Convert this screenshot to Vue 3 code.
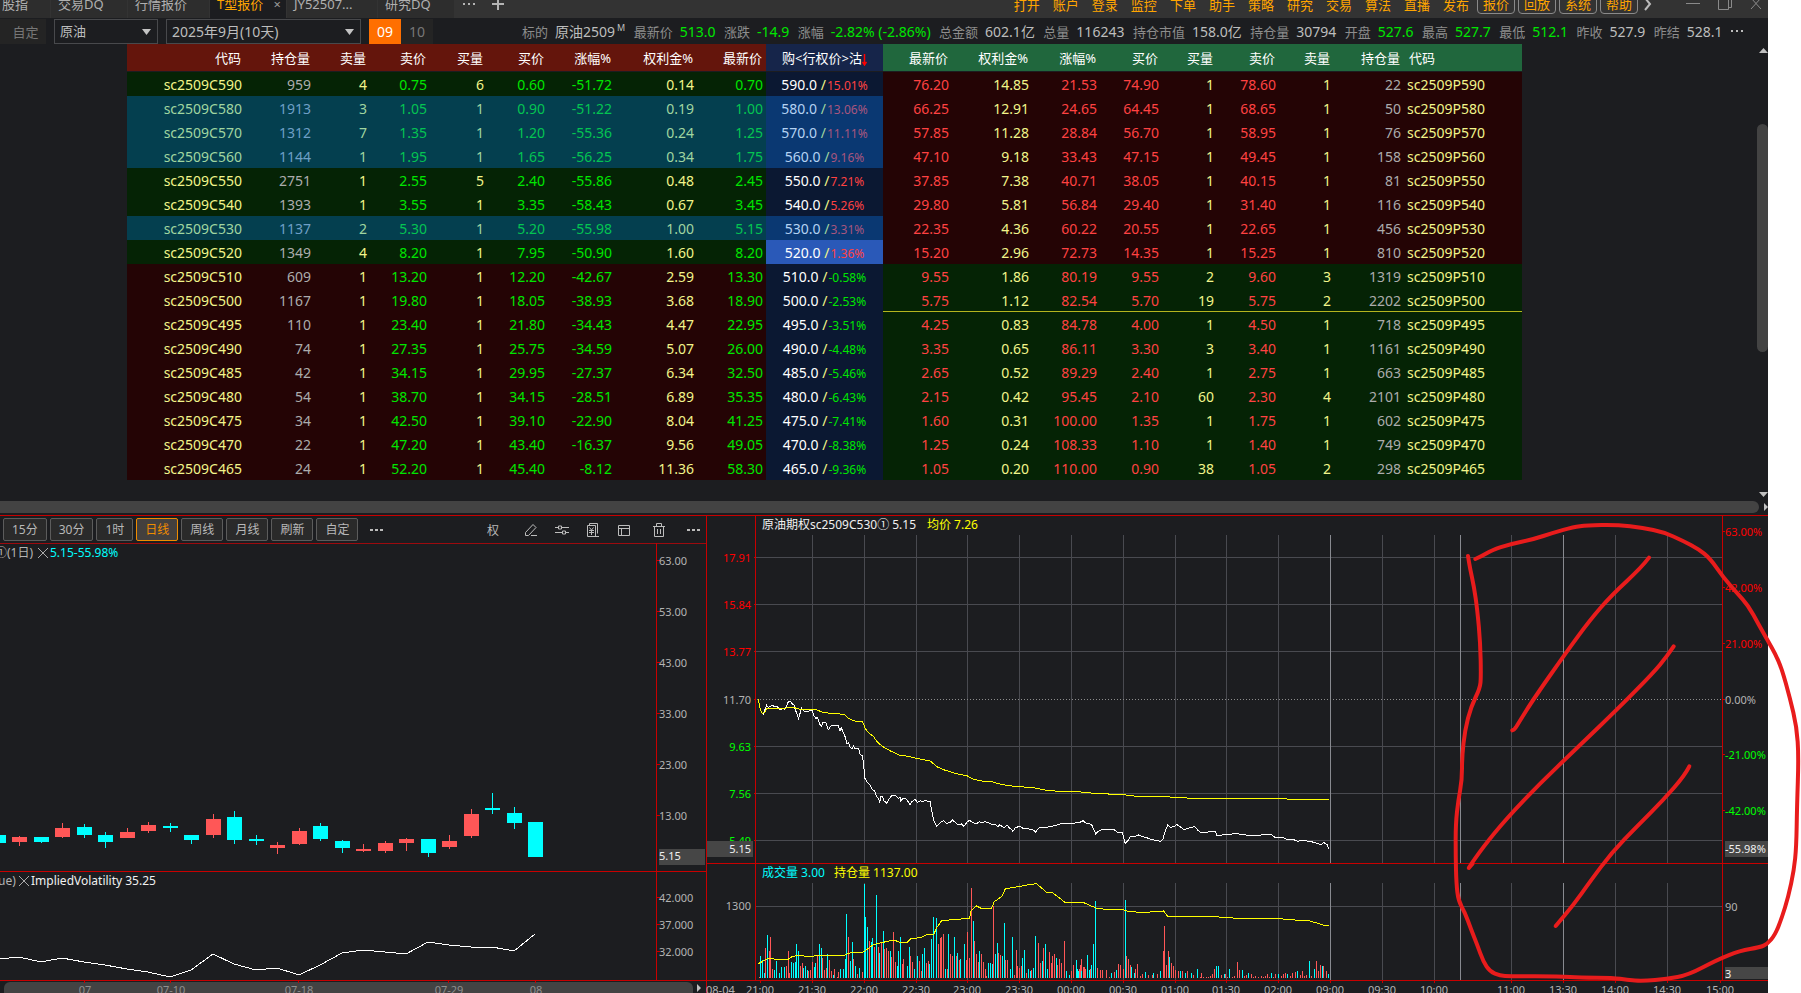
<script setup>
const tabs = [
  { name: '股指', w: 50 },
  { name: '交易DQ', w: 76 },
  { name: '行情报价', w: 81 },
  { name: 'T型报价', w: 76, active: true },
  { name: 'JY52507...', w: 90 },
  { name: '研究DQ', w: 76 },
]
const menu = ['打开', '账户', '登录', '监控', '下单', '助手', '策略', '研究', '交易', '算法', '直播', '发布']
const boxedMenu = ['报价', '回放', '系统', '帮助']

const quote = [
  { k: '标的', v: '原油2509', sup: 'M' },
  { k: '最新价', v: '513.0', g: true },
  { k: '涨跌', v: '-14.9', g: true },
  { k: '涨幅', v: '-2.82% (-2.86%)', g: true },
  { k: '总金额', v: '602.1亿' },
  { k: '总量', v: '116243' },
  { k: '持仓市值', v: '158.0亿' },
  { k: '持仓量', v: '30794' },
  { k: '开盘', v: '527.6', g: true },
  { k: '最高', v: '527.7', g: true },
  { k: '最低', v: '512.1', g: true },
  { k: '昨收', v: '527.9' },
  { k: '昨结', v: '528.1' },
]

const columns = [118, 69, 56, 60, 57, 61, 67, 82, 69, 117, 69, 80, 68, 62, 55, 62, 55, 70, 118]
const callHeads = ['代码', '持仓量', '卖量', '卖价', '买量', '买价', '涨幅%', '权利金%', '最新价']
const putHeads = ['最新价', '权利金%', '涨幅%', '买价', '买量', '卖价', '卖量', '持仓量', '代码']

// strike | strike distance | call cells | put cells
const rows = `590|15.01%|959 4 0.75 6 0.60 -51.72 0.14 0.70|76.20 14.85 21.53 74.90 1 78.60 1 22
580|13.06%|1913 3 1.05 1 0.90 -51.22 0.19 1.00|66.25 12.91 24.65 64.45 1 68.65 1 50
570|11.11%|1312 7 1.35 1 1.20 -55.36 0.24 1.25|57.85 11.28 28.84 56.70 1 58.95 1 76
560|9.16%|1144 1 1.95 1 1.65 -56.25 0.34 1.75|47.10 9.18 33.43 47.15 1 49.45 1 158
550|7.21%|2751 1 2.55 5 2.40 -55.86 0.48 2.45|37.85 7.38 40.71 38.05 1 40.15 1 81
540|5.26%|1393 1 3.55 1 3.35 -58.43 0.67 3.45|29.80 5.81 56.84 29.40 1 31.40 1 116
530|3.31%|1137 2 5.30 1 5.20 -55.98 1.00 5.15|22.35 4.36 60.22 20.55 1 22.65 1 456
520|1.36%|1349 4 8.20 1 7.95 -50.90 1.60 8.20|15.20 2.96 72.73 14.35 1 15.25 1 810
510|-0.58%|609 1 13.20 1 12.20 -42.67 2.59 13.30|9.55 1.86 80.19 9.55 2 9.60 3 1319
500|-2.53%|1167 1 19.80 1 18.05 -38.93 3.68 18.90|5.75 1.12 82.54 5.70 19 5.75 2 2202
495|-3.51%|110 1 23.40 1 21.80 -34.43 4.47 22.95|4.25 0.83 84.78 4.00 1 4.50 1 718
490|-4.48%|74 1 27.35 1 25.75 -34.59 5.07 26.00|3.35 0.65 86.11 3.30 3 3.40 1 1161
485|-5.46%|42 1 34.15 1 29.95 -27.37 6.34 32.50|2.65 0.52 89.29 2.40 1 2.75 1 663
480|-6.43%|54 1 38.70 1 34.15 -28.51 6.89 35.35|2.15 0.42 95.45 2.10 60 2.30 4 2101
475|-7.41%|34 1 42.50 1 39.10 -22.90 8.04 41.25|1.60 0.31 100.00 1.35 1 1.75 1 602
470|-8.38%|22 1 47.20 1 43.40 -16.37 9.56 49.05|1.25 0.24 108.33 1.10 1 1.40 1 749
465|-9.36%|24 1 52.20 1 45.40 -8.12 11.36 58.30|1.05 0.20 110.00 0.90 38 1.05 2 298`
  .split('\n')
  .map((line) => {
    const [strike, dist, call, put] = line.split('|')
    const n = Number(strike)
    return {
      strike,
      dist,
      call: call.split(' '),
      put: put.split(' '),
      above: n >= 520,
      held: [580, 570, 560, 530].includes(n),
      atm: n === 520,
      mark: n === 500,
    }
  })
const callKinds = ['oi', 'vol', 'dn', 'vol', 'dn', 'dn', 'vol', 'dn']
const putKinds = ['up', 'vol', 'up', 'up', 'vol', 'up', 'vol', 'oi']

const periods = ['15分', '30分', '1时', '日线', '周线', '月线', '刷新', '自定']

// centre, body top, body bottom, high, low, rising
const candles = [
  [-2, 835, 843, 835, 843, 0], [19, 837, 842, 836, 846, 1], [41, 837, 842, 837, 843, 0],
  [62, 828, 837, 823, 838, 1], [84, 827, 835, 824, 838, 0], [105, 835, 842, 832, 848, 0],
  [127, 832, 838, 828, 838, 1], [148, 825, 831, 822, 833, 1], [170, 826, 828, 823, 832, 0],
  [191, 835, 840, 835, 844, 0], [213, 819, 835, 814, 838, 1], [234, 817, 840, 811, 844, 0],
  [256, 839, 841, 835, 845, 0], [277, 845, 848, 842, 854, 1], [299, 831, 844, 828, 845, 1],
  [320, 826, 839, 823, 841, 0], [342, 841, 848, 840, 853, 0], [363, 849, 851, 844, 852, 1],
  [385, 843, 851, 841, 853, 1], [406, 839, 843, 838, 851, 1], [428, 839, 853, 839, 857, 0],
  [449, 841, 847, 835, 849, 1], [471, 814, 836, 809, 838, 1], [492, 808, 810, 793, 814, 0],
  [514, 813, 823, 807, 829, 0], [535, 822, 857, 822, 857, 0],
]
const volatility =
  '0,959 19,957 41,962 62,958 84,962 105,965 127,969 148,972 170,977 191,970 213,954 234,964 256,970 277,968 299,975 320,965 342,953 363,950 385,952 406,954 428,942 449,945 471,947 492,947 514,951 535,934'

const priceAxis = [63, 53, 43, 33, 23, 13].map((v, i) => ({ t: v + '.00', y: 561 + i * 51 }))
const volAxis = [{ t: '42.000', y: 898 }, { t: '37.000', y: 925 }, { t: '32.000', y: 952 }]
const dates = [{ t: '07', x: 85 }, { t: '07-10', x: 171 }, { t: '07-18', x: 299 }, { t: '07-29', x: 449 }, { t: '08', x: 536 }]

const leftScale = [
  { t: '17.91', y: 557, c: 'red' }, { t: '15.84', y: 604, c: 'red' }, { t: '13.77', y: 651, c: 'red' },
  { t: '11.70', y: 699, c: 'grey' }, { t: '9.63', y: 746, c: 'green' }, { t: '7.56', y: 793, c: 'green' },
  { t: '5.49', y: 840, c: 'green' },
]
const rightScale = [
  { t: '63.00%', y: 532, c: 'red' }, { t: '42.00%', y: 588, c: 'red' }, { t: '21.00%', y: 644, c: 'red' },
  { t: '0.00%', y: 700, c: 'grey' }, { t: '-21.00%', y: 755, c: 'green' }, { t: '-42.00%', y: 811, c: 'green' },
]
const times = [
  ['21:00', 760], ['21:30', 812], ['22:00', 864], ['22:30', 916], ['23:00', 967], ['23:30', 1019],
  ['00:00', 1071], ['00:30', 1123], ['01:00', 1175], ['01:30', 1226], ['02:00', 1278], ['09:00', 1330],
  ['09:30', 1382], ['10:00', 1434], ['11:00', 1511], ['13:30', 1563], ['14:00', 1615], ['14:30', 1667], ['15:00', 1720],
]
const gridX = [812, 864, 916, 967, 1019, 1071, 1123, 1175, 1226, 1278, 1382, 1434, 1511, 1615, 1667]
const sessionX = [1330, 1460, 1563]

const lastPrice =
  '143,597 145,612 148,630 152,640 156,643 160,625 163,616 167,622 172,619 177,615 182,620 188,619 193,625 198,630 203,624 208,628 212,618 216,606 222,605 226,612 230,615 233,628 237,640 241,656 245,640 249,625 255,634 262,636 268,632 275,630 279,648 284,655 288,652 293,672 297,680 301,668 308,667 314,690 320,678 330,677 338,676 343,692 346,684 352,700 356,712 360,732 364,728 368,742 373,746 376,738 380,746 388,745 392,762 398,768 401,800 404,835 410,848 416,855 422,868 428,873 432,890 437,896 440,907 443,890 447,890 450,902 458,910 464,895 470,887 478,886 486,895 490,892 492,904 497,894 503,895 508,902 514,914 519,905 527,898 532,907 540,902 546,905 553,900 558,906 564,906 567,930 572,960 580,979 588,968 597,962 604,970 612,968 618,960 626,968 632,974 640,972 646,979 654,966 660,961 668,968 676,972 684,965 692,968 698,965 706,968 714,973 722,972 730,980 734,974 740,980 746,982 752,975 758,984 764,990 766,995 772,984 783,978 792,986 800,985 808,988 816,990 822,996 830,984 840,981 850,982 860,979 872,976 884,971 892,972 902,970 912,972 922,968 932,966 938,962 944,969 952,970 960,976 965,990 969,1002 975,994 985,988 1000,988 1014,989 1022,996 1034,998 1038,1015 1041,1030 1048,1022 1054,1010 1064,1010 1074,1005 1084,1010 1092,1012 1104,1018 1116,1021 1128,1024 1134,1018 1138,998 1146,974 1152,982 1160,980 1168,974 1176,980 1186,990 1192,986 1200,983 1212,980 1220,992 1228,998 1244,996 1262,995 1266,1006 1290,1004 1310,1001 1330,1003 1350,1008 1370,1006 1386,1002 1400,1004 1408,1012 1430,1014 1440,1020 1452,1018 1464,1024 1476,1020 1490,1024 1500,1026 1510,1030 1520,1034 1528,1028 1536,1034 1540,1046'
const averagePrice =
  '143,597 147,625 152,640 158,638 164,626 200,626 216,623 228,622 245,628 275,628 287,630 300,637 320,640 353,643 362,654 378,663 398,664 405,687 415,700 425,710 435,727 450,742 465,752 490,766 510,769 530,775 564,783 580,800 596,809 625,820 655,828 670,838 690,843 714,845 740,854 770,859 815,863 850,871 880,874 925,875 965,880 1035,884 1070,889 1135,890 1165,892 1205,895 1420,896 1455,898 1540,900'
const openInterest =
  '143,371 152,365 165,357 180,357 216,358 225,350 238,347 270,349 300,346 350,347 372,337 400,336 410,327 425,314 440,309 460,304 475,300 490,307 508,307 516,296 540,293 555,284 572,285 580,262 592,242 610,240 650,236 660,236 664,212 677,198 690,206 714,206 720,186 740,168 748,146 785,139 795,136 824,131 848,156 862,157 895,188 910,189 940,188 960,199 975,206 1000,208 1035,208 1045,213 1075,217 1130,215 1135,212 1145,229 1185,230 1250,229 1290,233 1318,235 1420,236 1440,239 1490,242 1508,248 1530,257 1540,255'

// Volume ticks: early session and late session are sampled on different scales.
const buyEarly =
  '25,228;31,240;37,279;46,165;67,270;73,243;82,279;88,261;97,261;118,246;124,249;130,246;133,192;139,213;154,264;160,258;166,270;187,261;190,249;202,192;208,204;226,222;244,285;265,267;273,267;280,237;283,102;295,243;301,186;310,258;322,264;337,12;340,111;346,141;358,186;361,174;373,45;382,219;394,153;415,212;436,258;439,213;445,171;466,258;472,201;487,267;496,228;511,222;517,204;532,252;538,177;544,111;553,114;580,267;589,162;607,171;616,219;625,238;637,192;664,123;682,213;709,249;715,249;721,252;730,222;736,189;751,228;757,129;775,267;781,171;811,234;817,210;829,267;835,273;844,264;850,168;871,243;880,192;886,267;913,234;943,273;952,285;973,240;979,273;1006,225;1012,270'
const sellEarly =
  '22,291;40,204;52,213;55,171;61,267;103,258;109,213;112,279;145,258;151,249;169,273;175,270;181,246;196,228;211,234;217,270;223,264;232,240;238,273;247,267;256,291;259,276;289,171;304,237;316,282;331,276;352,183;367,201;379,201;388,189;397,207;403,204;409,213;418,231;424,156;430,246;451,252;454,237;475,228;481,246;502,243;508,273;523,249;529,243;559,192;565,174;568,171;574,162;586,267;595,222;601,228;613,228;622,240;643,240;646,156;652,234;658,24;667,183;673,222;679,246;688,222;694,246;700,267;703,288;724,78;739,219;745,225;760,240;766,240;787,285;793,210;796,258;802,264;808,258;823,279;838,270;859,189;865,249;874,204;892,216;898,249;901,228;907,222;916,255;922,237;928,249;937,183;958,273;964,255;982,267;988,237;994,261;1000,267;1015,267'
const buyLate =
  '925,387;935,392;950,345;960,375;964,312;968,183;1008,400;1021,390;1042,180;1058,380;1064,400;1091,395;1112,400;1128,392;1150,350;1176,392;1190,398;1205,400;1219,386;1266,378;1270,378;1285,402;1298,388;1330,390;1345,398;1400,399;1418,403;1440,402;1465,393;1493,362;1505,388;1524,378;1540,401'
const sellLate =
  '916,387;922,360;931,375;943,380;955,398;974,385;980,390;986,391;996,390;1003,410;1015,395;1025,373;1029,376;1037,388;1045,348;1050,358;1055,376;1068,388;1072,373;1078,408;1085,401;1100,404;1108,405;1120,401;1135,332;1138,258;1143,374;1148,333;1155,370;1160,378;1166,391;1172,393;1182,394;1195,393;1210,404;1225,410;1229,400;1234,410;1240,410;1245,410;1250,408;1256,402;1261,388;1277,405;1288,402;1293,410;1305,410;1310,409;1317,366;1321,390;1335,408;1340,404;1350,401;1356,410;1362,408;1368,410;1375,407;1381,410;1386,409;1390,403;1395,410;1405,410;1410,403;1424,408;1430,402;1435,400;1446,407;1452,399;1458,396;1470,406;1475,393;1480,408;1485,406;1498,409;1510,362;1516,394;1520,375;1528,377;1535,393'
function ticks(data, x0, sx, y0) {
  return data
    .split(';')
    .map((p) => {
      const [x, y] = p.split(',').map(Number)
      return `M${Math.floor(x0 + x / sx) + 0.5} ${Math.round(y0 + y / 3)}V978`
    })
    .join('')
}
const buyPath = ticks(buyEarly, 752, 3, 880) + ticks(buyLate, 700, 2.45, 840)
const sellPath = ticks(sellEarly, 752, 3, 880) + ticks(sellLate, 700, 2.45, 840)

function smooth(data) {
  const p = data.split(' ').map((s) => s.split(',').map(Number))
  let d = `M${p[0][0]} ${p[0][1]}`
  for (let i = 1; i < p.length - 1; i++) {
    d += `Q${p[i][0]} ${p[i][1]} ${(p[i][0] + p[i + 1][0]) / 2} ${(p[i][1] + p[i + 1][1]) / 2}`
  }
  const e = p[p.length - 1]
  return d + `L${e[0]} ${e[1]}`
}
const penStrokes = [
  '526,207 545,199 575,181 630,162 700,148 760,128 820,111 860,106 950,104 1030,114 1090,126 1150,153 1195,177 1230,205 1270,262 1310,308 1345,347 1375,402 1405,455 1425,490 1445,535 1470,625 1490,710 1496,800 1491,950 1489,1070 1482,1140 1465,1220 1445,1285 1425,1335 1402,1362 1380,1372 1320,1382 1250,1410 1165,1455 1100,1467 1030,1473 980,1470 940,1463 840,1463 780,1459 630,1459 600,1457 570,1445 550,1415 532,1365 512,1315 495,1268 475,1232 469,1180 467,1100 467,1000 475,930 486,870 486,800 495,720 513,650 540,595 543,560 541,460 532,360 522,290 510,235 504,198',
  '1047,203 1025,232 935,315 870,390 800,485 700,628 660,692 645,717 637,721',
  '1121,469 1100,500 1060,548 960,650 830,775 720,880 620,985 550,1070 500,1142 517,1122',
  '1168,829 1155,855 1090,930 1010,1010 935,1088 870,1175 820,1245 767,1308',
].map(smooth)
</script>

<template>
  <div class="page">
    <div class="window">
      <header class="titlebar">
        <nav class="tabs">
          <button v-for="t in tabs" :key="t.name" class="tab" :class="{ active: t.active }" :style="{ width: t.w + 'px' }">
            {{ t.name }}<span v-if="t.active" class="close">×</span>
          </button>
          <button class="more" aria-label="更多">
            <svg width="14" height="4"><path d="M1 2h2M6 2h2M11 2h2" stroke="#b4b4b4" stroke-width="2" /></svg>
          </button>
          <button class="add" aria-label="新建">
            <svg width="12" height="12"><path d="M0 6h12M6 0v12" stroke="#b4b4b4" stroke-width="2" /></svg>
          </button>
        </nav>
        <div class="menu">
          <button v-for="m in menu" :key="m" class="item">{{ m }}</button>
          <div class="boxes"><button v-for="m in boxedMenu" :key="m" class="box">{{ m }}</button></div>
          <svg class="chev" width="8" height="14"><path d="M1 1l5 6-5 6" fill="none" stroke="#bbb" stroke-width="2" /></svg>
        </div>
        <div class="controls">
          <button aria-label="最小化"><svg width="14" height="14"><path d="M0 6.500h14" stroke="#8a8a8a" /></svg></button>
          <button aria-label="还原"><svg width="14" height="14"><path d="M.5 2.500h10v10H.5zM13.500 0v10.500H11" fill="none" stroke="#8a8a8a" /></svg></button>
          <button aria-label="关闭"><svg width="12" height="14"><path d="M1 1l10 11M11 1L1 12" stroke="#8a8a8a" /></svg></button>
        </div>
      </header>

      <div class="infobar">
        <button class="custom">自定</button>
        <div class="pick variety">
          <select aria-label="品种"><option>原油</option></select>
          <svg width="9" height="6"><path d="M0 0h9L4.500 6z" fill="#c4c4c4" /></svg>
        </div>
        <div class="pick month">
          <select aria-label="到期月份"><option>2025年9月(10天)</option></select>
          <svg width="9" height="6"><path d="M0 0h9L4.500 6z" fill="#c4c4c4" /></svg>
        </div>
        <div class="months"><button class="on">09</button><button>10</button></div>
        <div class="quote">
          <span v-for="q in quote" :key="q.k" class="pair">
            <span class="k">{{ q.k }}</span><span :class="{ g: q.g }">{{ q.v }}</span><sup v-if="q.sup">{{ q.sup }}</sup>
          </span>
          <svg width="12" height="2"><path d="M0 1h2M5 1h2M10 1h2" stroke="#bbb" stroke-width="2" /></svg>
        </div>
      </div>

      <div class="board">
        <div class="tablewrap">
          <table>
            <colgroup><col v-for="(w, i) in columns" :key="i" :style="{ width: w + 'px' }" /></colgroup>
            <thead>
              <tr>
                <th v-for="h in callHeads" :key="'c' + h" class="hc">{{ h }}</th>
                <th class="hm">购&lt;行权价&gt;沽<svg width="5" height="12"><path d="M2.500 0v11M.5 8l2 3 2-3" fill="none" stroke="#f00" stroke-width="1.500" /></svg></th>
                <th v-for="h in putHeads" :key="'p' + h" class="hp" :class="{ code: h === '代码' }">{{ h }}</th>
              </tr>
            </thead>
            <tbody>
              <tr v-for="r in rows" :key="r.strike" :class="{ above: r.above, held: r.held, atm: r.atm, mark: r.mark }">
                <td class="call vol">sc2509C{{ r.strike }}</td>
                <td v-for="(v, i) in r.call" :key="'c' + i" class="call" :class="callKinds[i]">{{ v }}</td>
                <td class="strike">{{ r.strike }}.0 <i>/</i><b :class="r.above ? 'up' : 'dn'">{{ r.dist }}</b></td>
                <td v-for="(v, i) in r.put" :key="'p' + i" class="put" :class="putKinds[i]">{{ v }}</td>
                <td class="put vol code">sc2509P{{ r.strike }}</td>
              </tr>
            </tbody>
          </table>
        </div>
        <div class="vscroll">
          <svg width="9" height="5"><path d="M0 5h9L4.500 0z" fill="#c0c0c0" /></svg>
          <div class="vthumb"></div>
          <svg width="9" height="5"><path d="M0 0h9L4.500 5z" fill="#c0c0c0" /></svg>
        </div>
      </div>
      <div class="hscroll">
        <div class="hthumb"></div>
        <svg width="4" height="8"><path d="M0 0v8l4-4z" fill="#c0c0c0" /></svg>
      </div>

      <main class="charts">
        <section class="daily">
          <div class="toolbar">
            <button v-for="p in periods" :key="p" class="period" :class="{ on: p === '日线' }">{{ p }}</button>
            <button class="dots" aria-label="更多周期"><svg width="13" height="2"><path d="M0 1h3M5 1h3M10 1h3" stroke="#bbb" stroke-width="2" /></svg></button>
            <div class="tools">
              <button class="adj">权</button>
              <button aria-label="画线"><svg width="14" height="14" class="ic"><path d="M1.500 9.500l7.500-8 3 3-7.500 8H1.500zM7 12.500h6" /></svg></button>
              <button aria-label="设置"><svg width="14" height="14" class="ic"><path d="M0 4.500h3M7 4.500h7M0 9.500h7M11 9.500h3M3.500 3h3v3h-3zM7.500 8h3v3h-3z" /></svg></button>
              <button aria-label="模拟"><svg width="14" height="14" class="ic"><path d="M3.500 2.500v-2h8v10M1.500 2.500h8v11h-8zM3.500 4.500l2 2.500 2-2.500M3 7.500h5M3 9.500h5M5.500 7v5M9 13.500h4" /></svg></button>
              <button aria-label="布局"><svg width="14" height="14" class="ic"><path d="M1.500 2.500h11v10h-11zM1.500 5.500h11M4.500 5.500v7" /></svg></button>
              <button class="trash" aria-label="删除"><svg width="14" height="14" class="ic"><path d="M1 3.500h12M4.500 3V.5h5V3M2.500 3.500v10h9v-10M5.500 6v5M8.500 6v5" /></svg></button>
              <button class="trash" aria-label="更多工具"><svg width="13" height="2"><path d="M0 1h3M5 1h3M10 1h3" stroke="#bbb" stroke-width="2" /></svg></button>
            </div>
          </div>
          <svg class="plot" viewBox="0 543 706 450">
            <path d="M0 543.500h706" stroke="#9c0a0e" />
            <text x="-5" y="557" class="t12 grey">①(1日)</text>
            <path d="M38 548l10 10M48 548l-10 10" stroke="#aaa" />
            <text x="50" y="557" class="t12 cyan">5.15-55.98%</text>
            <g v-for="c in candles" :key="c[0]" :fill="c[5] ? '#ff5757' : '#00ffff'">
              <rect :x="c[0] - 7" :y="c[1]" width="15" :height="c[2] - c[1]" />
              <rect :x="c[0]" :y="c[3]" width="1" :height="c[4] - c[3]" />
            </g>
            <path class="line" d="M656.500 543v437M0 871.500h706M0 980.500h706" />
            <g v-for="a in [...priceAxis, ...volAxis]" :key="a.t">
              <path class="line" :d="`M657 ${a.y - 0.5}h3`" />
              <text x="659" :y="a.y + 4" class="t11 grey">{{ a.t }}</text>
            </g>
            <rect x="659" y="849" width="46" height="16" fill="#464646" />
            <text x="659" y="860" class="t11 light">5.15</text>
            <text x="-2" y="885" class="t12 grey">ue)</text>
            <path d="M19 876l10 10M29 876l-10 10" stroke="#aaa" />
            <text x="31" y="885" class="t12 light">ImpliedVolatility 35.25</text>
            <polyline :points="volatility" class="trace" fill="none" stroke="#fff" />
            <rect x="4" y="982" width="689" height="16" rx="6" fill="#434343" />
            <g v-for="d in dates" :key="d.t">
              <path class="line" :d="`M${d.x - 0.5} 980v3`" />
              <text :x="d.x" y="994" text-anchor="middle" class="t11 dim">{{ d.t }}</text>
            </g>
            <path d="M697 984v8l4-4z" fill="#c0c0c0" />
          </svg>
        </section>

        <section class="intraday">
          <svg class="plot" viewBox="706 516 1062 477">
            <g class="grid">
              <path v-for="x in gridX" :key="x" :d="`M${x + 0.5} 535V863M${x + 0.5} 883V980`" />
              <path v-for="y in [557, 604, 651, 746, 793, 840, 906]" :key="y" :d="`M756 ${y + 0.5}H1722`" />
            </g>
            <path v-for="x in sessionX" :key="x" :d="`M${x + 0.5} 535V863M${x + 0.5} 883V980`" stroke="#888a90" />
            <path d="M757 699.500H1722" stroke="#8c8c8c" stroke-dasharray="1 2" />
            <g fill="none">
              <path :d="sellPath" stroke="#ff5757" />
              <path :d="buyPath" stroke="#00ffff" />
              <g transform="translate(700 500) scale(.40833 .33333)">
                <polyline :points="lastPrice" class="trace" stroke="#fff" />
                <polyline :points="averagePrice" class="trace" stroke="#ff0" />
              </g>
              <g transform="translate(700 840) scale(.40833 .33333)">
                <polyline :points="openInterest" class="trace" stroke="#ff0" />
              </g>
            </g>
            <path class="line" d="M706.500 516V993M755.500 516V980M1722.500 516V980M706 863.500H1768M706 980.500H1768" />
            <text x="762" y="529" class="t12 light">原油期权sc2509C530① 5.15</text>
            <text x="927" y="529" class="t12 yellow">均价 7.26</text>
            <text x="762" y="877" class="t12 cyan">成交量 3.00</text>
            <text x="834" y="877" class="t12 yellow">持仓量 1137.00</text>
            <g v-for="s in leftScale" :key="s.t">
              <path class="line" :d="`M754 ${s.y + 0.5}h2`" />
              <text x="751" :y="s.y + 5" text-anchor="end" class="t11" :class="s.c">{{ s.t }}</text>
            </g>
            <rect x="707" y="841" width="46" height="16" fill="#464646" />
            <text x="751" y="853" text-anchor="end" class="t11 light">5.15</text>
            <text x="751" y="910" text-anchor="end" class="t11 grey">1300</text>
            <g v-for="s in rightScale" :key="s.t">
              <path class="line" :d="`M1722 ${s.y - 0.5}h3`" />
              <text x="1725" :y="s.y + 4" class="t11" :class="s.c">{{ s.t }}</text>
            </g>
            <rect x="1725" y="841" width="43" height="16" fill="#464646" />
            <text x="1725" y="853" class="t11 light">-55.98%</text>
            <text x="1725" y="911" class="t11 grey">90</text>
            <rect x="1725" y="967" width="43" height="12" fill="#464646" />
            <text x="1725" y="978" class="t11 light">3</text>
            <text x="706" y="994" class="t11 grey">08-04</text>
            <g v-for="t in times" :key="t[0]">
              <path class="line" :d="`M${t[1] + 0.5} 980v3`" />
              <text :x="t[1]" y="994" text-anchor="middle" class="t11 grey">{{ t[0] }}</text>
            </g>
          </svg>
        </section>
      </main>
    </div>

    <svg class="pen" viewBox="0 0 1801 993" aria-hidden="true">
      <g transform="translate(1300 490) scale(.33333)">
        <path v-for="(d, i) in penStrokes" :key="i" :d="d" />
      </g>
    </svg>
  </div>
</template>

<style>
body {
  background: #fff;
}
</style>

<style scoped>
.page {
  position: relative;
  height: 100vh;
  overflow: hidden;
  padding-right: 33px;
  box-sizing: border-box;
  font-family: 'Noto Sans', 'Noto Sans CJK SC', sans-serif;
  font-size: 13px;
}
.window {
  height: 100%;
  overflow: hidden;
  background: #1c1d20;
}
button,
select {
  font: inherit;
  color: inherit;
  background: none;
  border: 0;
  padding: 0;
  margin: 0;
}
button svg {
  display: block;
}
.titlebar {
  display: flex;
  align-items: flex-end;
  height: 18px;
  overflow: hidden;
  background: #333;
}
.tabs {
  display: flex;
  align-items: center;
  flex: 1;
  color: #b0b0b0;
}
.tab {
  position: relative;
  height: 28px;
  line-height: 28px;
  margin-right: 1px;
  box-sizing: border-box;
  padding-left: 7px;
  text-align: left;
  white-space: nowrap;
  background: #2d2d2d;
}
.tab:first-child {
  padding-left: 2px;
}
.tab.active {
  background: #1c1d20;
  color: #ffa500;
}
.close {
  position: absolute;
  right: 5px;
  top: 0;
  color: #999;
}
.more {
  margin-left: 7px;
}
.add {
  margin-left: 16px;
}
.menu {
  display: flex;
  align-items: center;
  height: 28px;
  gap: 13px;
  color: #ffa500;
}
.boxes {
  display: flex;
  gap: 3px;
  margin-left: -5px;
}
.box {
  width: 38px;
  height: 20px;
  line-height: 18px;
  box-sizing: border-box;
  border: 1px solid #8a8a8a;
  border-radius: 4px;
}
.chev {
  margin-left: -7px;
}
.controls {
  display: flex;
  align-items: center;
  gap: 18px;
  height: 28px;
  margin: 0 6px 0 34px;
}
.infobar {
  display: flex;
  align-items: center;
  height: 26px;
  color: #bdbdbd;
}
.custom {
  width: 46px;
  height: 25px;
  padding-left: 5px;
  background: #242424;
  color: #777;
}
.pick {
  position: relative;
  height: 25px;
  box-sizing: border-box;
  border: 1px solid #48494c;
  margin-left: 8px;
}
.pick select {
  appearance: none;
  display: block;
  width: 100%;
  height: 23px;
  padding-left: 5px;
  line-height: 23px;
}
.pick svg {
  position: absolute;
  right: 6px;
  top: 9px;
  pointer-events: none;
}
.variety {
  width: 104px;
}
.month {
  width: 195px;
  font-size: 14px;
}
.months {
  display: flex;
  margin-left: 8px;
  font-size: 14px;
  color: #777;
}
.months button {
  width: 32px;
  height: 25px;
  background: #242424;
}
.months .on {
  background: #ff6f00;
  color: #fff;
}
.quote {
  flex: 1;
  display: flex;
  align-items: center;
  justify-content: space-between;
  margin: 0 25px 0 89px;
  font-size: 14px;
  white-space: nowrap;
}
.k {
  font-size: 13px;
  color: #8d8d8d;
  margin-right: 7px;
}
.g {
  color: #00e600;
}
sup {
  font-size: 9px;
  line-height: 1px;
  margin-left: 2px;
}
.board {
  display: flex;
}
.tablewrap {
  flex: 1;
  padding: 0 0 21px 127px;
}
table {
  table-layout: fixed;
  width: 1395px;
  border-spacing: 0;
  font-size: 14px;
}
th {
  height: 27px;
  padding: 0 4px 0 0;
  border-bottom: 1px solid #1c1d20;
  font-size: 13px;
  font-weight: normal;
  text-align: right;
  color: #fff;
}
.hc {
  background: #64150c;
}
.hm {
  background: #16254a;
  text-align: center;
  padding: 0;
}
.hm svg {
  vertical-align: -3px;
}
.hp {
  background: #20673d;
}
td {
  box-sizing: border-box;
  height: 24px;
  line-height: 22px;
  padding: 2px 3px 0 0;
  text-align: right;
  white-space: nowrap;
}
.hp.code {
  text-align: left;
  padding-left: 5px;
}
td.code {
  text-align: left;
  padding: 2px 0 0 3px;
}
.call {
  background: #240405;
}
.put {
  background: #052305;
}
.above .call {
  background: #052305;
}
.above .put {
  background: #240405;
}
.oi {
  color: #acacac;
}
.vol {
  color: #f2f58a;
}
.dn {
  color: #00e600;
}
.up {
  color: #ff4242;
}
.strike {
  background: #0b1832;
  color: #fff;
  text-align: center;
  padding: 2px 0 0;
}
.strike i {
  font-style: normal;
  color: #f2f58a;
}
.strike b {
  font-weight: normal;
  font-size: 12px;
  line-height: 16px;
  margin-left: 1px;
}
.atm .strike {
  background: #2a59b8;
}
.held .call {
  background: #043f4f;
}
.held .call.vol {
  color: #a0d6a0;
}
.held .call.oi {
  color: #6e9fc6;
}
.held .call.dn {
  color: #04c452;
}
.held .strike {
  background: #0a3872;
  color: #b4d2f2;
}
.held .strike i {
  color: #a0d6a0;
}
.held .strike b {
  color: #a8567e;
}
.mark .put {
  box-shadow: inset 0 -1px #b4b41e;
}
.vscroll {
  display: flex;
  flex-direction: column;
  align-items: flex-end;
  width: 11px;
  padding: 4px 0;
}
.vthumb {
  width: 11px;
  height: 228px;
  margin: 71px 0 auto;
  border-radius: 6px;
  background: #434343;
}
.hscroll {
  display: flex;
  align-items: center;
  justify-content: space-between;
  margin-bottom: 2px;
}
.hthumb {
  flex: 1;
  height: 12px;
  margin-right: 5px;
  border-radius: 0 6px 6px 0;
  background: #434343;
}
.charts {
  display: grid;
  grid-template-columns: 706fr 1062fr;
  border-top: 1px solid #c80000;
}
.toolbar {
  display: flex;
  align-items: center;
  gap: 3px;
  height: 27px;
  padding: 0 6px 0 3px;
  color: #b8b8b8;
}
.period {
  height: 23px;
  line-height: 21px;
  padding: 0 8px;
  border: 1px solid #5c5c5c;
  border-radius: 2px;
  background: #2a2a2a;
  font-size: 12px;
}
.period.on {
  border-color: #f08c00;
  background: #43403e;
  color: #f08c00;
}
.dots {
  margin-left: 9px;
}
.tools {
  display: flex;
  align-items: center;
  gap: 17px;
  margin-left: auto;
}
.adj {
  font-size: 12px;
  margin-right: 8px;
}
.trash {
  margin-left: 4px;
}
.ic {
  fill: none;
  stroke: #bdbdbd;
}
.plot {
  display: block;
  width: 100%;
  height: auto;
}
.line {
  stroke: #c80000;
  fill: none;
}
.grid {
  stroke: #494a50;
}
.trace {
  vector-effect: non-scaling-stroke;
  shape-rendering: crispEdges;
}
.t11 {
  font-size: 11px;
}
.t12 {
  font-size: 12px;
}
.grey {
  fill: #b4b4b4;
}
.dim {
  fill: #909090;
}
.light {
  fill: #f0f0f0;
}
.red {
  fill: #f00;
}
.green {
  fill: #0f0;
}
.cyan {
  fill: #0ff;
}
.yellow {
  fill: #ff0;
}
.pen {
  position: absolute;
  left: 0;
  top: 0;
  width: 100%;
  pointer-events: none;
  fill: none;
  stroke: #e81c1c;
  stroke-width: 12;
  stroke-linecap: round;
  stroke-linejoin: round;
}
</style>
